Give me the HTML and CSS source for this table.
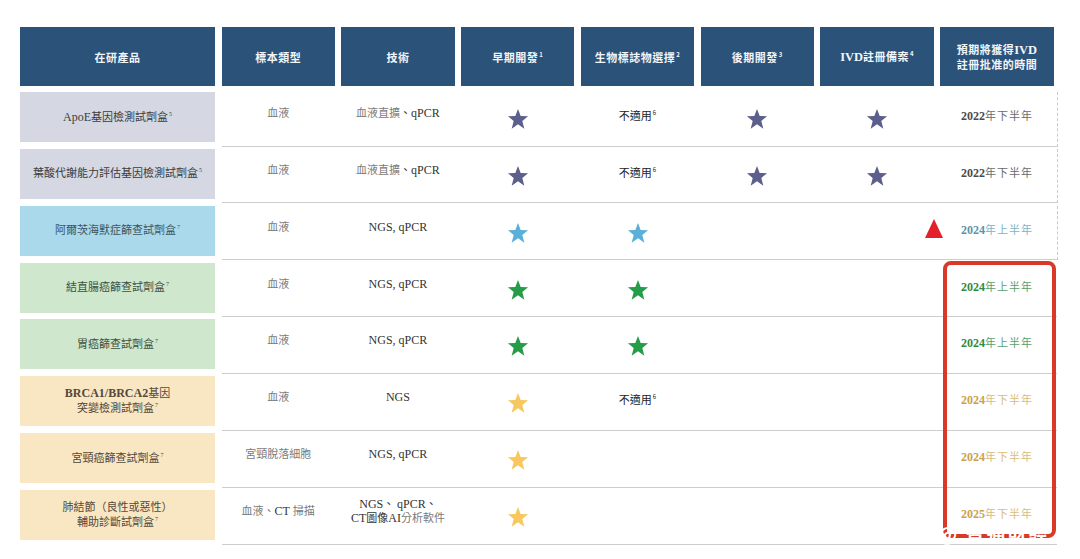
FILE: index.html
```html
<!DOCTYPE html>
<html lang="zh-Hant">
<head>
<meta charset="utf-8">
<title>在研產品</title>
<link rel="stylesheet" href="styles.css">
</head>
<body>
<svg width="0" height="0" class="defs">
  <defs>
    <symbol id="star" viewBox="0 0 24 24"><polygon points="12,1 14.9,8.6 23,9 16.7,14.1 18.9,22.6 12,17.8 5.1,22.6 7.3,14.1 1,9 9.1,8.6"/></symbol>
  </defs>
</svg>
<div class="page">
  <div class="table">
    <div class="head">
      <div class="hc"><span>在研產品</span></div>
      <div class="hc"><span>標本類型</span></div>
      <div class="hc"><span>技術</span></div>
      <div class="hc"><span>早期開發<sup>1</sup></span></div>
      <div class="hc"><span>生物標誌物選擇<sup>2</sup></span></div>
      <div class="hc"><span>後期開發<sup>3</sup></span></div>
      <div class="hc"><span><span class="lat">IVD</span>註冊備案<sup>4</sup></span></div>
      <div class="hc two"><span>預期將獲得<span class="lat">IVD</span><br>註冊批准的時間</span></div>
    </div>

    <div class="row">
      <div class="prod gray"><span><span class="lat">ApoE</span>基因檢測試劑盒<sup>5</sup></span></div>
      <div class="data dashed">
        <div class="c txt muted"><span>血液</span></div>
        <div class="c txt"><span><span class="muted">血液直擴</span>、<span class="lat">qPCR</span></span></div>
        <div class="c star"><svg class="s purple"><use href="#star"/></svg></div>
        <div class="c na"><span>不適用<sup>6</sup></span></div>
        <div class="c star"><svg class="s purple"><use href="#star"/></svg></div>
        <div class="c star"><svg class="s purple"><use href="#star"/></svg></div>
        <div class="c date d-gray"><span><b>2022</b>年下半年</span></div>
      </div>
    </div>

    <div class="row">
      <div class="prod gray"><span>葉酸代謝能力評估基因檢測試劑盒<sup>5</sup></span></div>
      <div class="data dashed">
        <div class="c txt muted"><span>血液</span></div>
        <div class="c txt"><span><span class="muted">血液直擴</span>、<span class="lat">qPCR</span></span></div>
        <div class="c star"><svg class="s purple"><use href="#star"/></svg></div>
        <div class="c na"><span>不適用<sup>6</sup></span></div>
        <div class="c star"><svg class="s purple"><use href="#star"/></svg></div>
        <div class="c star"><svg class="s purple"><use href="#star"/></svg></div>
        <div class="c date d-gray"><span><b>2022</b>年下半年</span></div>
      </div>
    </div>

    <div class="row">
      <div class="prod blue"><span>阿爾茨海默症篩查試劑盒<sup>7</sup></span></div>
      <div class="data dashed">
        <div class="c txt muted"><span>血液</span></div>
        <div class="c txt"><span class="lat">NGS, qPCR</span></div>
        <div class="c star"><svg class="s sblue"><use href="#star"/></svg></div>
        <div class="c star"><svg class="s sblue"><use href="#star"/></svg></div>
        <div class="c"></div>
        <div class="c"></div>
        <div class="c date d-blue"><span class="tri"></span><span><b>2024</b>年上半年</span></div>
      </div>
    </div>

    <div class="row">
      <div class="prod green"><span>結直腸癌篩查試劑盒<sup>7</sup></span></div>
      <div class="data">
        <div class="c txt muted"><span>血液</span></div>
        <div class="c txt"><span class="lat">NGS, qPCR</span></div>
        <div class="c star"><svg class="s sgreen"><use href="#star"/></svg></div>
        <div class="c star"><svg class="s sgreen"><use href="#star"/></svg></div>
        <div class="c"></div>
        <div class="c"></div>
        <div class="c date d-green"><span><b>2024</b>年上半年</span></div>
      </div>
    </div>

    <div class="row">
      <div class="prod green"><span>胃癌篩查試劑盒<sup>7</sup></span></div>
      <div class="data">
        <div class="c txt muted"><span>血液</span></div>
        <div class="c txt"><span class="lat">NGS, qPCR</span></div>
        <div class="c star"><svg class="s sgreen"><use href="#star"/></svg></div>
        <div class="c star"><svg class="s sgreen"><use href="#star"/></svg></div>
        <div class="c"></div>
        <div class="c"></div>
        <div class="c date d-green"><span><b>2024</b>年上半年</span></div>
      </div>
    </div>

    <div class="row">
      <div class="prod beige"><span><span class="lat b">BRCA1/BRCA2</span>基因<br>突變檢測試劑盒<sup>7</sup></span></div>
      <div class="data">
        <div class="c txt muted"><span>血液</span></div>
        <div class="c txt"><span class="lat">NGS</span></div>
        <div class="c star"><svg class="s syellow"><use href="#star"/></svg></div>
        <div class="c na"><span>不適用<sup>6</sup></span></div>
        <div class="c"></div>
        <div class="c"></div>
        <div class="c date d-gold"><span><b>2024</b>年下半年</span></div>
      </div>
    </div>

    <div class="row">
      <div class="prod beige"><span>宮頸癌篩查試劑盒<sup>7</sup></span></div>
      <div class="data">
        <div class="c txt muted"><span>宮頸脫落細胞</span></div>
        <div class="c txt"><span class="lat">NGS, qPCR</span></div>
        <div class="c star"><svg class="s syellow"><use href="#star"/></svg></div>
        <div class="c"></div>
        <div class="c"></div>
        <div class="c"></div>
        <div class="c date d-gold"><span><b>2024</b>年下半年</span></div>
      </div>
    </div>

    <div class="row">
      <div class="prod beige"><span>肺結節（良性或惡性）<br>輔助診斷試劑盒<sup>7</sup></span></div>
      <div class="data">
        <div class="c txt muted"><span>血液、<span class="lat dark">CT</span> 掃描</span></div>
        <div class="c txt two"><span><span class="lat">NGS</span>、 <span class="lat">qPCR</span>、<br><span class="lat">CT</span>圖像<span class="lat">AI</span><span class="muted">分析軟件</span></span></div>
        <div class="c star"><svg class="s syellow"><use href="#star"/></svg></div>
        <div class="c"></div>
        <div class="c"></div>
        <div class="c"></div>
        <div class="c date d-gold"><span><b>2025</b>年下半年</span></div>
      </div>
    </div>

    <div class="redbox"></div>
    <div class="mark">@ 智通財經</div>
  </div>
</div>
</body>
</html>
```

FILE: styles.css
```css
html, body {
  margin: 0;
  padding: 0;
  background: #ffffff;
}
.defs {
  position: absolute;
  width: 0;
  height: 0;
}
.page {
  padding: 27px 0 0 20px;
  font-family: "Liberation Serif", "Noto Sans CJK TC", serif;
  color: #3a3a3a;
}
.table {
  position: relative;
  width: 1040px;
  display: flex;
  flex-direction: column;
}
.head {
  display: grid;
  grid-template-columns: 195px repeat(7, 113.3px);
  column-gap: 6.5px;
  height: 59px;
  margin-bottom: 6px;
}
.hc {
  background: #2b5279;
  color: #f2f5f8;
  font-family: "Noto Sans CJK TC", sans-serif;
  font-size: 11px;
  font-weight: 700;
  display: flex;
  align-items: center;
  justify-content: center;
  text-align: center;
  line-height: 14px;
  letter-spacing: 0.5px;
}
.hc .lat {
  font-family: "Liberation Serif", serif;
  font-size: 12.5px;
  font-weight: 700;
  letter-spacing: 0;
}
.hc.two {
  line-height: 14px;
}
sup {
  font-size: 6px;
  line-height: 0;
  vertical-align: 5px;
  margin-left: 1px;
}
.lat {
  font-family: "Liberation Serif", serif;
  font-size: 12px;
}
.lat.b {
  font-weight: 700;
}
.row {
  display: grid;
  grid-template-columns: 195px 835px;
  column-gap: 6.5px;
  height: 56.86px;
}
.prod {
  height: 50px;
  display: flex;
  align-items: center;
  justify-content: center;
  text-align: center;
  font-family: "Liberation Serif", "Noto Sans CJK TC", serif;
  font-size: 11px;
  line-height: 15px;
  color: #3c3c3c;
}
.prod .lat {
  font-size: 12px;
}
.gray { background: #d5d8e3; }
.blue { background: #a9d9ea; color: #3d5560; }
.green { background: #cfe7cd; color: #3d5040; }
.beige { background: #f9e7c3; color: #54483a; }
.data {
  display: grid;
  grid-template-columns: repeat(7, 113.3px);
  column-gap: 6.5px;
  height: 53.5px;
  border-bottom: 1px solid #cdcdcd;
}
.data.dashed {
  border-right: 1px dashed #c9c9c9;
  margin-right: -1px;
}
.c {
  position: relative;
  display: flex;
  justify-content: center;
  align-items: flex-start;
  text-align: center;
  font-family: "Liberation Serif", "Noto Sans CJK TC", serif;
  font-size: 11px;
  line-height: 14px;
  color: #333;
}
.c.txt {
  padding-top: 14px;
}
.c.txt.two {
  padding-top: 7px;
}
.muted {
  color: #7a7a7a;
}
.dark {
  color: #333;
}
.c.star {
  padding-top: 16px;
}
.s {
  width: 22px;
  height: 22px;
}
.purple { fill: #5c5f8c; }
.sblue { fill: #5ab0d9; }
.sgreen { fill: #259c47; }
.syellow { fill: #f6c85f; }
.c.na {
  padding-top: 16px;
  color: #222;
  font-family: "Noto Sans CJK TC", sans-serif;
  font-size: 11px;
}
.c.date {
  padding-top: 16px;
  font-family: "Noto Sans CJK TC", sans-serif;
  font-size: 11px;
  letter-spacing: 1px;
}
.c.date b {
  font-family: "Liberation Serif", serif;
  font-size: 12px;
  font-weight: 700;
  letter-spacing: 0;
}
.d-gray { color: #6a6a6a; }
.d-gray b { color: #4a4a4a; }
.d-blue { color: #7fb3c6; }
.d-blue b { color: #5b93aa; }
.d-green { color: #5ba06a; }
.d-green b { color: #2f8a44; }
.d-gold { color: #d8bd7a; }
.d-gold b { color: #c9a24e; }
.tri {
  position: absolute;
  left: -15px;
  top: 13px;
  width: 0;
  height: 0;
  border-left: 9.5px solid transparent;
  border-right: 9.5px solid transparent;
  border-bottom: 19px solid #e4202a;
}
.redbox {
  position: absolute;
  left: 923px;
  top: 234px;
  width: 105px;
  height: 269px;
  border: 4px solid #d83a27;
  border-radius: 8px;
}
.mark {
  position: absolute;
  left: 918px;
  top: 495px;
  font-family: "Noto Sans CJK TC", sans-serif;
  font-size: 19px;
  line-height: 22px;
  font-weight: 700;
  color: #ffffff;
  letter-spacing: 2px;
  white-space: nowrap;
}
```
